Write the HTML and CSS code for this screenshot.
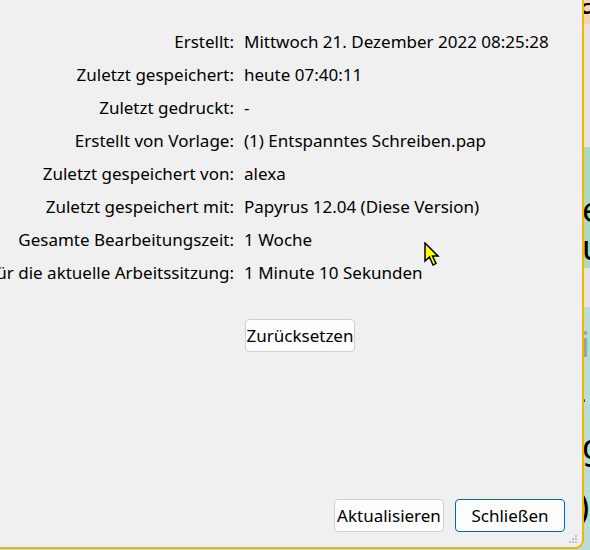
FILE: index.html
```html
<!DOCTYPE html>
<html lang="de">
<head>
<meta charset="utf-8">
<title>Eigenschaften</title>
<link rel="stylesheet" href="styles.css">
</head>
<body>
<div class="screen">
  <div class="dialog">
    <div class="info">
      <div class="label">Erstellt:</div><div class="value">Mittwoch 21. Dezember 2022 08:25:28</div>
      <div class="label">Zuletzt gespeichert:</div><div class="value">heute 07:40:11</div>
      <div class="label">Zuletzt gedruckt:</div><div class="value">-</div>
      <div class="label">Erstellt von Vorlage:</div><div class="value">(1) Entspanntes Schreiben.pap</div>
      <div class="label">Zuletzt gespeichert von:</div><div class="value">alexa</div>
      <div class="label">Zuletzt gespeichert mit:</div><div class="value">Papyrus 12.04 (Diese Version)</div>
      <div class="label">Gesamte Bearbeitungszeit:</div><div class="value">1 Woche</div>
      <div class="label">für die aktuelle Arbeitssitzung:</div><div class="value">1 Minute 10 Sekunden</div>
    </div>
    <div class="reset-row">
      <button class="btn">Zurücksetzen</button>
    </div>
    <div class="footer">
      <button class="btn">Aktualisieren</button>
      <button class="btn btn-default">Schließen</button>
    </div>
    <div class="grip">
      <span></span><span></span><span></span><span></span><span></span><span></span>
    </div>
    <svg class="cursor" width="16" height="26" viewBox="0 0 16 26">
      <path d="M1 1 L1 19 L5.5 15 L9 23 L12 21.5 L8.5 14 L14 14 Z" fill="#ffff00" stroke="#000" stroke-width="1.5" stroke-linejoin="miter"/>
    </svg>
  </div>
  <div class="backdrop">
    <div class="band band-tan"><span class="glyph g-a">a</span></div>
    <div class="band band-gray1"></div>
    <div class="band band-green"><span class="glyph g-e">e</span><span class="glyph g-u">u</span></div>
    <div class="band band-gray2"></div>
    <div class="band band-teal"><span class="glyph g-i">i</span><span class="glyph g-dash">-</span><span class="glyph g-g">g</span><span class="glyph g-p">)</span></div>
  </div>
</div>
</body>
</html>
```

FILE: styles.css
```css
html, body {
  margin: 0;
  padding: 0;
  width: 590px;
  height: 550px;
  overflow: hidden;
  background: #b5ddd9;
}

.screen {
  display: flex;
  width: 590px;
  height: 550px;
}

.dialog {
  position: relative;
  box-sizing: border-box;
  width: 584px;
  height: 549px;
  background: #f0f0f0;
  border-right: 2px solid #f5b400;
  border-bottom: 2px solid #f5b400;
  border-bottom-right-radius: 9px;
  overflow: hidden;
  font-family: "Noto Sans", "Open Sans", sans-serif;
  font-size: 17px;
  color: #000;
  display: flex;
  flex-direction: column;
}

.info {
  display: grid;
  grid-template-columns: 234px 1fr;
  column-gap: 10px;
  grid-auto-rows: 33px;
  margin-top: 25px;
}

.label {
  display: flex;
  justify-content: flex-end;
  align-items: center;
  white-space: nowrap;
}

.value {
  display: flex;
  align-items: center;
  white-space: nowrap;
}

.reset-row {
  margin-top: 30px;
  padding-left: 245px;
}

.btn {
  box-sizing: border-box;
  width: 110px;
  height: 33px;
  padding: 0;
  background: #fdfdfd;
  border: 1px solid #d0d0d0;
  border-radius: 4px;
  font-family: inherit;
  font-size: 17px;
  color: #000;
}

.btn-default {
  border: 1.5px solid #0067c0;
}

.footer {
  margin-top: auto;
  margin-bottom: 15px;
  display: flex;
  justify-content: flex-end;
  gap: 11px;
  padding-right: 17px;
}

.grip {
  position: absolute;
  right: 4px;
  bottom: 3px;
  width: 9px;
  height: 9px;
  display: grid;
  grid-template-columns: repeat(3, 3px);
  grid-template-rows: repeat(3, 3px);
}

.grip span {
  width: 2px;
  height: 2px;
  background: #c4c4c4;
}

.grip span:nth-child(1) { grid-column: 3; grid-row: 1; }
.grip span:nth-child(2) { grid-column: 2; grid-row: 2; }
.grip span:nth-child(3) { grid-column: 3; grid-row: 2; }
.grip span:nth-child(4) { grid-column: 1; grid-row: 3; }
.grip span:nth-child(5) { grid-column: 2; grid-row: 3; }
.grip span:nth-child(6) { grid-column: 3; grid-row: 3; }

.cursor {
  position: absolute;
  left: 424px;
  top: 242px;
}

.backdrop {
  flex: 1;
  display: flex;
  flex-direction: column;
  overflow: hidden;
  font-family: "Noto Sans", sans-serif;
  font-size: 34px;
  color: #000;
}

.band {
  position: relative;
  overflow: hidden;
}

.band-tan { height: 24px; background: #f2d7ae; }
.band-gray1 { height: 123px; background: #e4e4e4; }
.band-green { height: 121px; background: #a7dcc0; }
.band-gray2 { height: 39px; background: #e4e4e4; }
.band-teal { flex: 1; background: #b5ddd9; }

.glyph {
  position: absolute;
  left: -2px;
  line-height: 1;
}

.g-a { top: -16px; left: -5px; }
.g-e { top: 45px; }
.g-u { top: 83px; }
.g-i { top: 20px; left: -3px; color: #8aa8a4; }
.g-dash { top: 73px; left: -9px; }
.g-g { top: 122px; }
.g-p { top: 182px; left: -5px; }
```
